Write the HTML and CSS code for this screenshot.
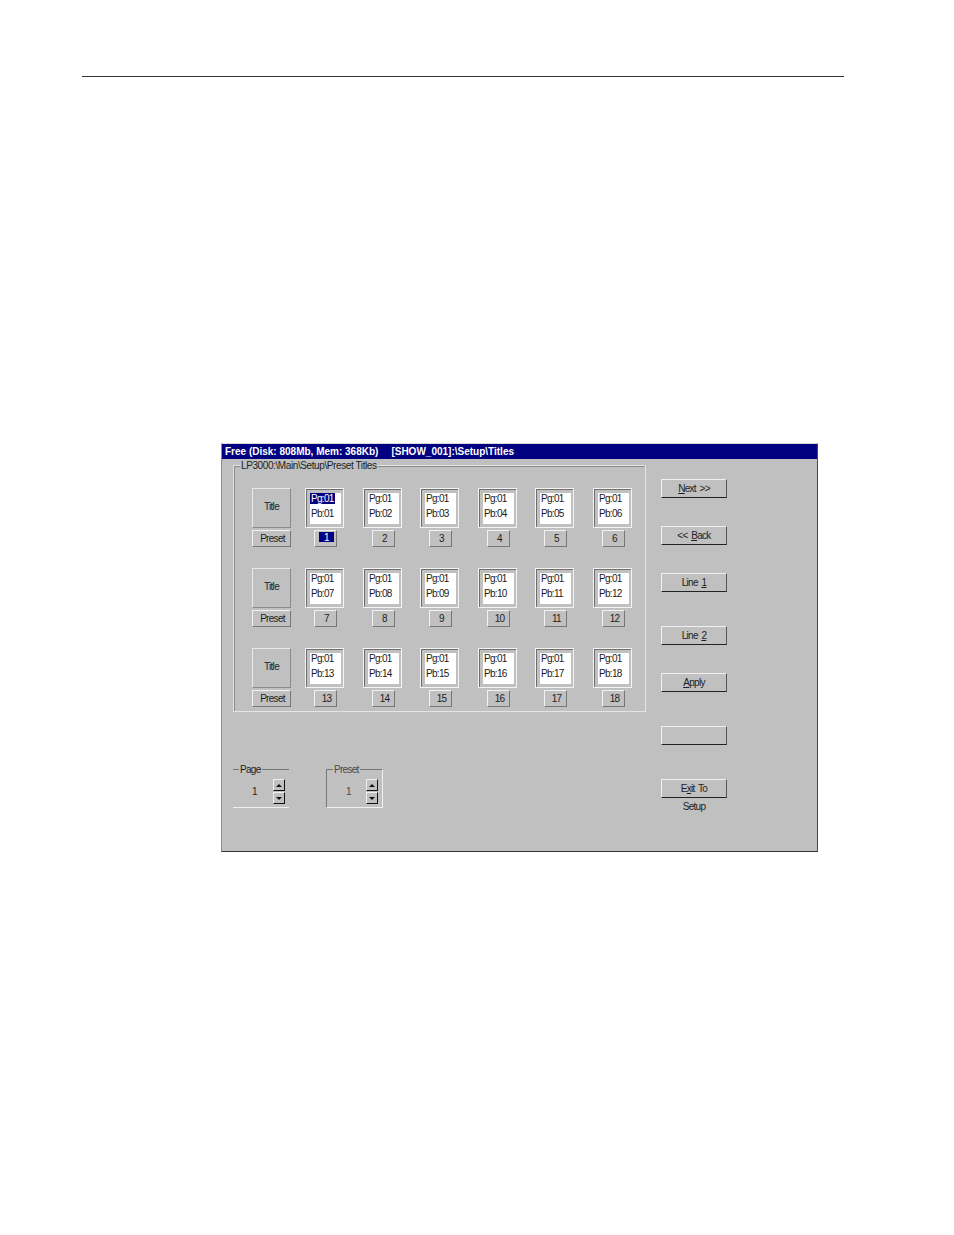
FILE: index.html
```html
<!DOCTYPE html>
<html lang="en">
<head>
    <meta charset="UTF-8">
    <title>Preset Titles</title>
    <link rel="stylesheet" href="styles.css">
</head>
<body>
    <hr class="page-rule">

    <div class="window">
        <div class="title-bar">
            <span>Free (Disk: 808Mb, Mem: 368Kb)</span>
            <span class="title-path">[SHOW_001]:\Setup\Titles</span>
        </div>

        <div class="window-body">
            <div class="left-col">
                <div class="group">
                    <span class="group-label main-label">LP3000:\Main\Setup\Preset Titles</span>

                    <div class="row">
                        <div class="row-head">
                            <div class="title-box">Title</div>
                            <div class="preset-box">Preset</div>
                        </div>
                        <div class="cells">
                            <div class="cell">
                                <div class="tile"><div class="tile-inner"><span class="selected">Pg:01</span><span>Pb:01</span></div></div>
                                <div class="num selected-num">1</div>
                            </div>
                            <div class="cell">
                                <div class="tile"><div class="tile-inner"><span>Pg:01</span><span>Pb:02</span></div></div>
                                <div class="num">2</div>
                            </div>
                            <div class="cell">
                                <div class="tile"><div class="tile-inner"><span>Pg:01</span><span>Pb:03</span></div></div>
                                <div class="num">3</div>
                            </div>
                            <div class="cell">
                                <div class="tile"><div class="tile-inner"><span>Pg:01</span><span>Pb:04</span></div></div>
                                <div class="num">4</div>
                            </div>
                            <div class="cell">
                                <div class="tile"><div class="tile-inner"><span>Pg:01</span><span>Pb:05</span></div></div>
                                <div class="num">5</div>
                            </div>
                            <div class="cell">
                                <div class="tile"><div class="tile-inner"><span>Pg:01</span><span>Pb:06</span></div></div>
                                <div class="num">6</div>
                            </div>
                        </div>
                    </div>

                    <div class="row">
                        <div class="row-head">
                            <div class="title-box">Title</div>
                            <div class="preset-box">Preset</div>
                        </div>
                        <div class="cells">
                            <div class="cell">
                                <div class="tile"><div class="tile-inner"><span>Pg:01</span><span>Pb:07</span></div></div>
                                <div class="num">7</div>
                            </div>
                            <div class="cell">
                                <div class="tile"><div class="tile-inner"><span>Pg:01</span><span>Pb:08</span></div></div>
                                <div class="num">8</div>
                            </div>
                            <div class="cell">
                                <div class="tile"><div class="tile-inner"><span>Pg:01</span><span>Pb:09</span></div></div>
                                <div class="num">9</div>
                            </div>
                            <div class="cell">
                                <div class="tile"><div class="tile-inner"><span>Pg:01</span><span>Pb:10</span></div></div>
                                <div class="num">10</div>
                            </div>
                            <div class="cell">
                                <div class="tile"><div class="tile-inner"><span>Pg:01</span><span>Pb:11</span></div></div>
                                <div class="num">11</div>
                            </div>
                            <div class="cell">
                                <div class="tile"><div class="tile-inner"><span>Pg:01</span><span>Pb:12</span></div></div>
                                <div class="num">12</div>
                            </div>
                        </div>
                    </div>

                    <div class="row">
                        <div class="row-head">
                            <div class="title-box">Title</div>
                            <div class="preset-box">Preset</div>
                        </div>
                        <div class="cells">
                            <div class="cell">
                                <div class="tile"><div class="tile-inner"><span>Pg:01</span><span>Pb:13</span></div></div>
                                <div class="num">13</div>
                            </div>
                            <div class="cell">
                                <div class="tile"><div class="tile-inner"><span>Pg:01</span><span>Pb:14</span></div></div>
                                <div class="num">14</div>
                            </div>
                            <div class="cell">
                                <div class="tile"><div class="tile-inner"><span>Pg:01</span><span>Pb:15</span></div></div>
                                <div class="num">15</div>
                            </div>
                            <div class="cell">
                                <div class="tile"><div class="tile-inner"><span>Pg:01</span><span>Pb:16</span></div></div>
                                <div class="num">16</div>
                            </div>
                            <div class="cell">
                                <div class="tile"><div class="tile-inner"><span>Pg:01</span><span>Pb:17</span></div></div>
                                <div class="num">17</div>
                            </div>
                            <div class="cell">
                                <div class="tile"><div class="tile-inner"><span>Pg:01</span><span>Pb:18</span></div></div>
                                <div class="num">18</div>
                            </div>
                        </div>
                    </div>
                </div>

                <div class="spinners">
                    <div class="spin-group spin-page">
                        <span class="group-label">Page</span>
                        <span class="spin-value">1</span>
                        <div class="spin-btns">
                            <div class="spin-btn"><i class="arrow-up"></i></div>
                            <div class="spin-btn"><i class="arrow-down"></i></div>
                        </div>
                    </div>
                    <div class="spin-group spin-preset">
                        <span class="group-label">Preset</span>
                        <span class="spin-value">1</span>
                        <div class="spin-btns">
                            <div class="spin-btn"><i class="arrow-up"></i></div>
                            <div class="spin-btn"><i class="arrow-down"></i></div>
                        </div>
                    </div>
                </div>
            </div>

            <div class="right-col">
                <div class="btn btn-next"><span><u>N</u>ext &gt;&gt;</span></div>
                <div class="btn btn-back"><span>&lt;&lt; <u>B</u>ack</span></div>
                <div class="btn btn-line1"><span>Line <u>1</u></span></div>
                <div class="btn btn-line2"><span>Line <u>2</u></span></div>
                <div class="btn btn-apply"><span><u>A</u>pply</span></div>
                <div class="btn btn-blank"></div>
                <div class="btn btn-exit"><span>E<u>x</u>it To</span></div>
                <div class="btn-caption">Setup</div>
            </div>
        </div>
    </div>
</body>
</html>
```

FILE: styles.css
```css
:root {
    --face: #c0c0c0;
    --navy: #000080;
    --text: #1e1e1e;
    --dark-edge: #4a4a4a;
}

body {
    margin: 0;
    background-color: #fff;
    font-family: "Liberation Sans", Arial, sans-serif;
    font-size: 10px;
    letter-spacing: -0.7px;
    word-spacing: 1.5px;
    color: var(--text);
}

.page-rule {
    margin: 76px 0 0 82px;
    width: 762px;
    height: 1px;
    border: none;
    background-color: #333;
}

.window {
    box-sizing: border-box;
    width: 597px;
    height: 409px;
    margin: 366px 0 0 221px;
    background-color: var(--face);
    border-top: 1px solid #d8d8d8;
    border-left: 1px solid #8c8c8c;
    border-right: 1px solid var(--dark-edge);
    border-bottom: 1px solid #333;
}

.title-bar {
    display: flex;
    gap: 13px;
    height: 15px;
    line-height: 15px;
    padding-left: 3px;
    background-color: var(--navy);
    color: #fff;
    font-weight: bold;
    letter-spacing: 0;
    word-spacing: 0;
    white-space: nowrap;
}

.window-body {
    display: flex;
    padding: 6px 0 0 11px;
}

.left-col {
    width: 428px;
}

/* group box around the three rows */
.group {
    position: relative;
    box-sizing: border-box;
    width: 413px;
    height: 247px;
    padding-top: 22px;
    border: 1px solid #e4e4e4;
    box-shadow: inset 1px 1px 0 #8a8a8a;
}

.group-label {
    position: absolute;
    top: -6px;
    left: 6px;
    padding: 0 1px;
    background-color: var(--face);
    line-height: 11px;
    white-space: nowrap;
}

.main-label {
    letter-spacing: -0.4px;
    word-spacing: 0;
}

.row {
    display: flex;
    height: 80px;
    padding-left: 18px;
}

.row-head {
    width: 53px;
}

.title-box,
.preset-box,
.num,
.tile {
    box-sizing: border-box;
    border: 1px solid;
    border-color: #f2f2f2 #777 #777 #f2f2f2;
}

.title-box {
    width: 39px;
    height: 40px;
    line-height: 36px;
    text-align: center;
    border-color: #e8e8e8 #8a8a8a #8a8a8a #e8e8e8;
}

.preset-box {
    width: 39px;
    height: 17px;
    margin-top: 2px;
    line-height: 15px;
    padding-left: 2px;
    text-align: center;
}

.cells {
    display: grid;
    grid-template-columns: 58px 57px 58px 57px 58px 39px;
}

.cell {
    width: 39px;
}

.tile {
    width: 39px;
    height: 40px;
    padding: 4px 2px 3px 4px;
    border-color: #f4f4f4;
    box-shadow: inset 1px 1px 0 #6e6e6e;
}

.tile-inner {
    box-sizing: border-box;
    display: flex;
    flex-direction: column;
    gap: 4px;
    height: 31px;
    background-color: #fff;
    line-height: 11px;
    color: #1a1a1a;
}

.tile-inner span {
    align-self: flex-start;
    padding: 0 1px;
}

.tile-inner .selected {
    background-color: var(--navy);
    color: #fff;
}

.num {
    width: 23px;
    height: 17px;
    margin: 2px 0 0 9px;
    padding-left: 2px;
    line-height: 15px;
    text-align: center;
}

.selected-num {
    padding: 1px 2px 4px 4px;
    line-height: 11px;
    background-clip: content-box;
    background-color: var(--navy);
    color: #fff;
}

.spinners {
    display: flex;
    margin-top: 57px;
}

.spin-group {
    position: relative;
    box-sizing: border-box;
    display: flex;
    justify-content: flex-end;
    height: 39px;
}

.spin-page {
    width: 56px;
    margin-right: 37px;
    border-top: 1px solid #777;
    border-bottom: 1px solid #f0f0f0;
}

.spin-preset {
    width: 57px;
    border: 1px solid;
    border-color: #777 #f0f0f0 #f0f0f0 #777;
    color: #4a4a4a;
}

.spin-value {
    position: absolute;
    top: 16px;
    left: 19px;
    line-height: 11px;
}

.spin-btns {
    display: flex;
    flex-direction: column;
    gap: 1px;
    margin: 9px 4px 0 0;
}

.spin-btn {
    box-sizing: border-box;
    display: flex;
    align-items: center;
    justify-content: center;
    width: 12px;
    height: 12px;
    border: 1px solid;
    border-color: #f0f0f0 #111 #111 #f0f0f0;
}

.arrow-up {
    border-left: 3px solid transparent;
    border-right: 3px solid transparent;
    border-bottom: 3px solid #111;
}

.arrow-down {
    border-left: 3px solid transparent;
    border-right: 3px solid transparent;
    border-top: 3px solid #111;
}

.right-col {
    display: flex;
    flex-direction: column;
    width: 66px;
}

.btn {
    box-sizing: border-box;
    flex: none;
    width: 66px;
    height: 19px;
    line-height: 17px;
    text-align: center;
    border: 1px solid;
    border-color: #f0f0f0 #555 #222 #f0f0f0;
}

.btn-next { margin-top: 14px; }
.btn-back { margin-top: 28px; }
.btn-line1 { margin-top: 28px; }
.btn-line2 { margin-top: 34px; }
.btn-apply { margin-top: 28px; }
.btn-blank { margin-top: 34px; }
.btn-exit { margin-top: 34px; }

.btn-caption {
    margin-top: 3px;
    line-height: 12px;
    text-align: center;
}
```
